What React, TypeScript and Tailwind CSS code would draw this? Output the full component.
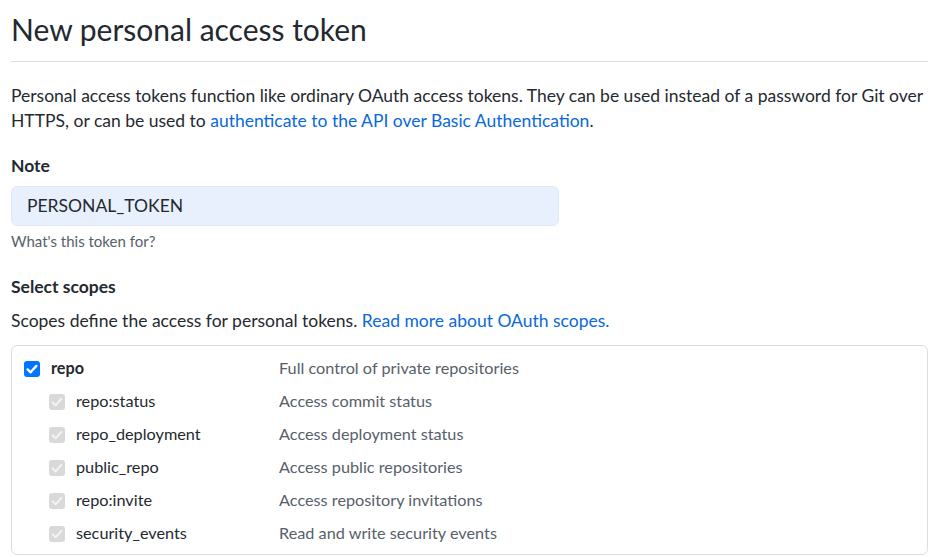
import React from 'react';

const scopes = [
  { name: 'repo:status', desc: 'Access commit status' },
  { name: 'repo_deployment', desc: 'Access deployment status' },
  { name: 'public_repo', desc: 'Access public repositories' },
  { name: 'repo:invite', desc: 'Access repository invitations' },
  { name: 'security_events', desc: 'Read and write security events' },
];

function Check({ disabled }: { disabled?: boolean }) {
  return (
    <span
      className={
        'flex h-4 w-4 shrink-0 items-center justify-center rounded-[3px] ' +
        (disabled ? 'bg-[#d9d9d9]' : 'bg-[#0075ff]')
      }
    >
      <svg viewBox="0 0 16 16" className="h-4 w-4">
        <path
          d="M3.6 8.4 L6.6 11.3 L12.4 4.9"
          fill="none"
          stroke={disabled ? '#f4f4f4' : '#ffffff'}
          strokeWidth={disabled ? 2 : 2.4}
          strokeLinecap="round"
          strokeLinejoin="round"
        />
      </svg>
    </span>
  );
}

export default function App() {
  return (
    <div
      className="min-h-screen bg-white pl-[11px] pr-[9px] pt-[10px] text-[#24292f]"
      style={{ fontFamily: 'Lato, "Noto Sans", sans-serif' }}
    >
      <div className="border-b border-[#d8dee4] pb-[13px]">
        <h2 className="text-[30px] font-normal leading-[38px]">New personal access token</h2>
      </div>

      <p className="mt-[21px] text-[17.5px] leading-[25px]">
        Personal access tokens function like ordinary OAuth access tokens. They can be used instead of a password for Git over
        HTTPS, or can be used to{' '}
        <a className="text-[#0969da]">authenticate to the API over Basic Authentication</a>.
      </p>

      <div className="mt-[20px] text-[17.5px] font-bold leading-[25px]">Note</div>
      <div className="mt-[8px] flex h-[40px] w-[548px] items-center rounded-[6px] border border-[#e2e8f3] bg-[#e8f0fe] px-[15px] text-[17.5px]">
        PERSONAL_TOKEN
      </div>
      <div className="mt-[5px] text-[15px] leading-[20px] text-[#57606a]">What's this token for?</div>

      <div className="mt-[23px] text-[17.5px] font-bold leading-[25px]">Select scopes</div>
      <p className="mt-[9px] text-[17.5px] leading-[25px]">
        Scopes define the access for personal tokens.{' '}
        <a className="text-[#0969da]">Read more about OAuth scopes.</a>
      </p>

      <div className="mt-[12px] rounded-[6px] border border-[#d8dee4] pb-[4px] pl-[12px] pt-[6px] text-[16.25px]">
        <div className="flex h-[33px] items-center">
          <div className="flex w-[255px] items-center gap-[11px]">
            <Check />
            <span className="font-bold">repo</span>
          </div>
          <span className="text-[#57606a]">Full control of private repositories</span>
        </div>
        {scopes.map((s) => (
          <div key={s.name} className="flex h-[33px] items-center">
            <div className="flex w-[255px] items-center gap-[11px] pl-[25px]">
              <Check disabled />
              <span>{s.name}</span>
            </div>
            <span className="text-[#57606a]">{s.desc}</span>
          </div>
        ))}
      </div>
    </div>
  );
}
